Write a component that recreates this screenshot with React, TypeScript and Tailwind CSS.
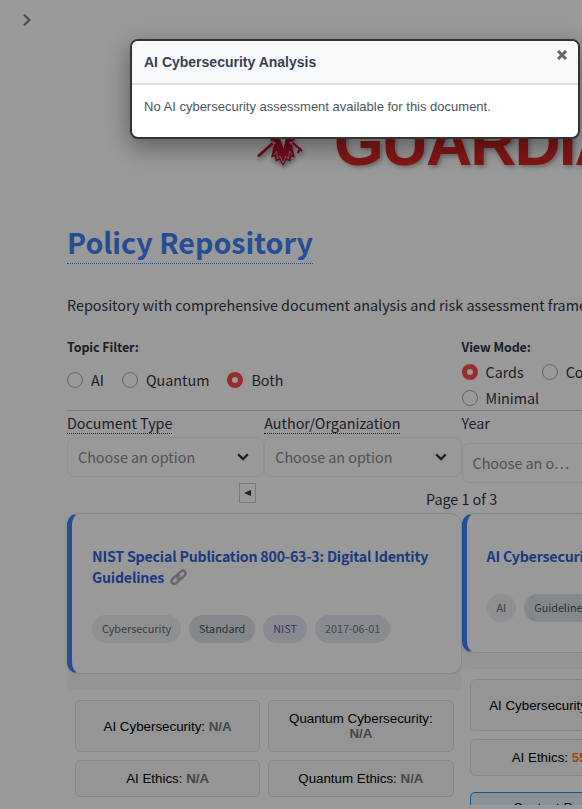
import React from "react";

const sans = "font-['Noto_Sans_CJK_SC','Noto_Sans',sans-serif]";
const arial = "font-['Liberation_Sans',Arial,sans-serif]";

function Radio({ label, on = false }: { label: string; on?: boolean }) {
  return (
    <label className="flex h-6 items-center gap-2">
      <span
        className={
          on
            ? "flex size-4 items-center justify-center rounded-full bg-[#ff4b4b]"
            : "size-4 rounded-full border border-[#a6a7ab]"
        }
      >
        {on && <span className="size-1.5 rounded-full bg-white" />}
      </span>
      <span className="text-[14.33px] leading-6">{label}</span>
    </label>
  );
}

function Select({ text, arrow = true }: { text: string; arrow?: boolean }) {
  return (
    <div className="flex h-10 items-center justify-between rounded-lg border border-[#f0f0f5] pr-3.5 pl-2.5">
      <span className="whitespace-nowrap pb-px text-[14.33px] text-[#85868c]">{text}</span>
      {arrow && (
        <svg width="12" height="8" viewBox="0 0 12 8" fill="none" stroke="#31333f" strokeWidth="2.2">
          <path d="M1.2 1.4 6 6.1l4.8-4.7" />
        </svg>
      )}
    </div>
  );
}

function Tag({ text, tone }: { text: string; tone: string }) {
  return (
    <span className={`flex h-7 items-center rounded-full px-2.5 pb-px text-[10.8px] ${tone}`}>{text}</span>
  );
}

function Score({ name, value, tone = "text-[#6c757d]" }: { name: string; value: string; tone?: string }) {
  return (
    <div className="flex items-center justify-center rounded-[5px] border border-[#dee2e6] bg-[#f8f8f9] px-3 text-center text-[13.33px] leading-[15px] text-black">
      <span>
        {name}: <b className={tone}>{value}</b>
      </span>
    </div>
  );
}

function LinkIcon() {
  return (
    <svg className="ml-1.5 inline-block align-[-3px]" width="17" height="17" viewBox="0 0 17 17" fill="none" strokeLinecap="round">
      <g stroke="#b3a4b9" strokeWidth="2.3">
        <rect x="1" y="8" width="9.4" height="5.6" rx="2.8" transform="rotate(-45 5.7 10.8)" />
        <rect x="6.6" y="3" width="9.4" height="5.6" rx="2.8" transform="rotate(-45 11.3 5.8)" />
      </g>
      <path d="m6.8 10 3.4-3.4" stroke="#d2c8d6" strokeWidth="1.4" />
    </svg>
  );
}

function Emblem() {
  return (
    <svg className="shrink-0 drop-shadow-[1px_3px_2px_rgba(0,0,0,0.4)]" width="48" height="74" viewBox="0 0 48 74" fill="none">
      <g stroke="#c01030" strokeLinecap="round">
        <path d="M3 60.5 17 48" strokeWidth="3" />
        <path d="m37 48 8.500 7.500m-3.500 2 2-4" strokeWidth="2" />
      </g>
      <path
        d="M16 40 18 50 15 62.500l4-1 .5 5 4-1.500 3.500 6 3.500-6 4 1.500.5-5 4 1L36 50l2-10h-7.500L27.500 54 23 40Z"
        fill="#c01030"
      />
      <path
        d="m18 60 2.500-4 1 8 2.500-3 3 7 3-7 2.500 3 1-8 2.500 4"
        stroke="#e29aa8"
        strokeWidth=".9"
      />
      <g fill="#eab4be">
        <circle cx="17.800" cy="48" r="1.500" />
        <circle cx="35" cy="48" r="1.500" />
      </g>
      <path d="m14.500 45 3-1 3 1.500M39 44.500l-3-.5-3 1.500" stroke="#c01030" strokeWidth="2" />
    </svg>
  );
}

export default function App() {
  return (
    <div className={`relative h-[809px] w-[582px] overflow-hidden bg-white text-[#31333f] ${sans}`}>
      <header className="h-[225px]">
        <div className="flex h-10 items-center pl-[22px]">
          <svg width="10" height="14" viewBox="0 0 10 14" fill="none" stroke="#76777f" strokeWidth="2">
            <path d="m2 1.800 5.500 5.200L2 12.200" />
          </svg>
        </div>
        <div className="flex h-[140px] pt-[55px] pl-[256px]">
          <Emblem />
          <span
            className={`ml-[30px] pt-5 text-[64px] leading-[56px] font-bold tracking-[-2px] text-[#dc2626] [text-shadow:2px_2px_4px_rgba(0,0,0,0.3)] ${arial}`}
          >
            GUARDIAN
          </span>
        </div>
      </header>

      <main className="ml-[67px] w-[789px]">
        <h1 className="h-[39px] w-fit border-b border-dotted border-[#3b82f6] text-[28.65px] leading-[34px] font-bold text-[#3b82f6]">
          Policy Repository
        </h1>
        <p className="mt-[29px] h-6 text-[14.33px] leading-6 whitespace-nowrap">
          Repository with comprehensive document analysis and risk assessment framework
        </p>

        <section className="mt-5 grid h-[74px] grid-cols-2 border-b border-[#d0d1d4]">
          <div>
            <h2 className="text-[12.5px] leading-5 font-bold tracking-[-0.1px]">Topic Filter:</h2>
            <div className="mt-[11px] flex gap-[18px]">
              <Radio label="AI" />
              <Radio label="Quantum" />
              <Radio label="Both" on />
            </div>
          </div>
          <div>
            <h2 className="text-[12.5px] leading-5 font-bold tracking-[-0.1px]">View Mode:</h2>
            <div className="mt-[3px] flex gap-[18px]">
              <Radio label="Cards" on />
              <Radio label="Compact" />
            </div>
            <div className="mt-0.5">
              <Radio label="Minimal" />
            </div>
          </div>
        </section>

        <section className="grid h-[72px] grid-cols-4 text-[14.33px]">
          <div>
            <div className="mb-[3px] h-[23px] w-fit border-b border-dotted border-[#31333f] leading-[23px]">Document Type</div>
            <Select text="Choose an option" />
          </div>
          <div>
            <div className="mb-[3px] h-[23px] w-fit border-b border-dotted border-[#31333f] leading-[23px]">Author/Organization</div>
            <Select text="Choose an option" />
          </div>
          <div>
            <div className="h-8 leading-[23px]">Year</div>
            <Select text="Choose an o…" arrow={false} />
          </div>
        </section>

        <div className="flex h-[30px] text-[14.33px]">
          <button className="ml-[172px] flex h-5 w-[17px] items-center justify-center border border-[#c8c8c8]">
            <svg width="7" height="6" viewBox="0 0 7 6" fill="#31333f">
              <path d="M0 3 7 0v6Z" />
            </svg>
          </button>
          <span className="ml-[170px] pt-1 leading-6">Page 1 of 3</span>
        </div>

        <section className="grid grid-cols-2">
          <div>
            <article className="h-[161px] rounded-xl border border-l-[5px] border-[#dee2e6] border-l-[#3b82f6] bg-white pt-8 pl-5 shadow-[0_2px_4px_rgba(0,0,0,0.1)]">
              <h3 className="h-[42px] text-[14.2px] leading-[21px] font-bold tracking-[-0.2px] text-[#2f5fd8]">
                NIST Special Publication 800-63-3: Digital Identity
                <br />
                Guidelines
                <LinkIcon />
              </h3>
              <div className="mt-[27px] flex gap-2">
                <Tag text="Cybersecurity" tone="bg-[#ebeef0] text-[#606870]" />
                <Tag text="Standard" tone="bg-[#dde3e8] text-[#495057]" />
                <Tag text="NIST" tone="bg-[#e8e6f6] text-[#5c54a4]" />
                <Tag text="2017-06-01" tone="bg-[#e6e8ef] text-[#6b7280]" />
              </div>
            </article>
            <div className="h-4 rounded-b-md bg-[#f7f7f7]" />
            <div className={`mt-2.5 grid grid-cols-2 grid-rows-[52px_37px] gap-2 px-2 ${arial}`}>
              <Score name="AI Cybersecurity" value="N/A" />
              <Score name="Quantum Cybersecurity" value="N/A" />
              <Score name="AI Ethics" value="N/A" />
              <Score name="Quantum Ethics" value="N/A" />
            </div>
          </div>
          <div className="h-[292px] overflow-hidden">
            <article className="h-[140px] rounded-xl border border-l-[5px] border-[#dee2e6] border-l-[#3b82f6] bg-white pt-8 pl-5 shadow-[0_2px_4px_rgba(0,0,0,0.1)]">
              <h3 className="text-[14.2px] leading-[21px] font-bold tracking-[-0.2px] text-[#2f5fd8]">AI Cybersecurity Guidance</h3>
              <div className="mt-[27px] flex gap-2">
                <Tag text="AI" tone="bg-[#ebeef0] text-[#606870]" />
                <Tag text="Guideline" tone="bg-[#dde3e8] text-[#495057]" />
              </div>
            </article>
            <div className="h-4 rounded-b-md bg-[#f7f7f7]" />
            <div className={`mt-2.5 grid grid-cols-2 grid-rows-[52px_37px] gap-2 px-2 ${arial}`}>
              <Score name="AI Cybersecurity" value="55/100" tone="text-[#fd7e14]" />
              <Score name="Quantum Cybersecurity" value="N/A" />
              <Score name="AI Ethics" value="55/100" tone="text-[#fd7e14]" />
              <Score name="Quantum Ethics" value="N/A" />
            </div>
            <div className={`mx-2 mt-4 h-10 w-[185px] rounded-[5px] border border-[#2196f3] bg-[#e3f2fd] pt-[7px] text-center text-[13.33px] leading-4 text-black ${arial}`}>
              Content Preview
            </div>
          </div>
        </section>
      </main>

      <div className="absolute inset-0 bg-black/40" />

      <div
        role="dialog"
        className={`absolute top-[39px] left-[130px] h-[100px] w-[450px] overflow-hidden rounded-lg border-2 border-[#333] bg-white shadow-[0_8px_24px_rgba(0,0,0,0.4)] ${arial}`}
      >
        <div className="flex h-11 justify-between border-b-2 border-[#ddd] bg-[#f8f9fa] pl-3">
          <h2 className="text-[14px] leading-[42px] font-bold text-[#374151]">AI Cybersecurity Analysis</h2>
          <svg className="mt-[9px] mr-[11px]" width="10" height="10" viewBox="0 0 10 10" stroke="#666" strokeWidth="3">
            <path d="m1 1 8 8m0-8L1 9" />
          </svg>
        </div>
        <p className="pt-3 pl-3 text-[13px] leading-5 text-[#4b5563]">No AI cybersecurity assessment available for this document.</p>
      </div>
    </div>
  );
}
